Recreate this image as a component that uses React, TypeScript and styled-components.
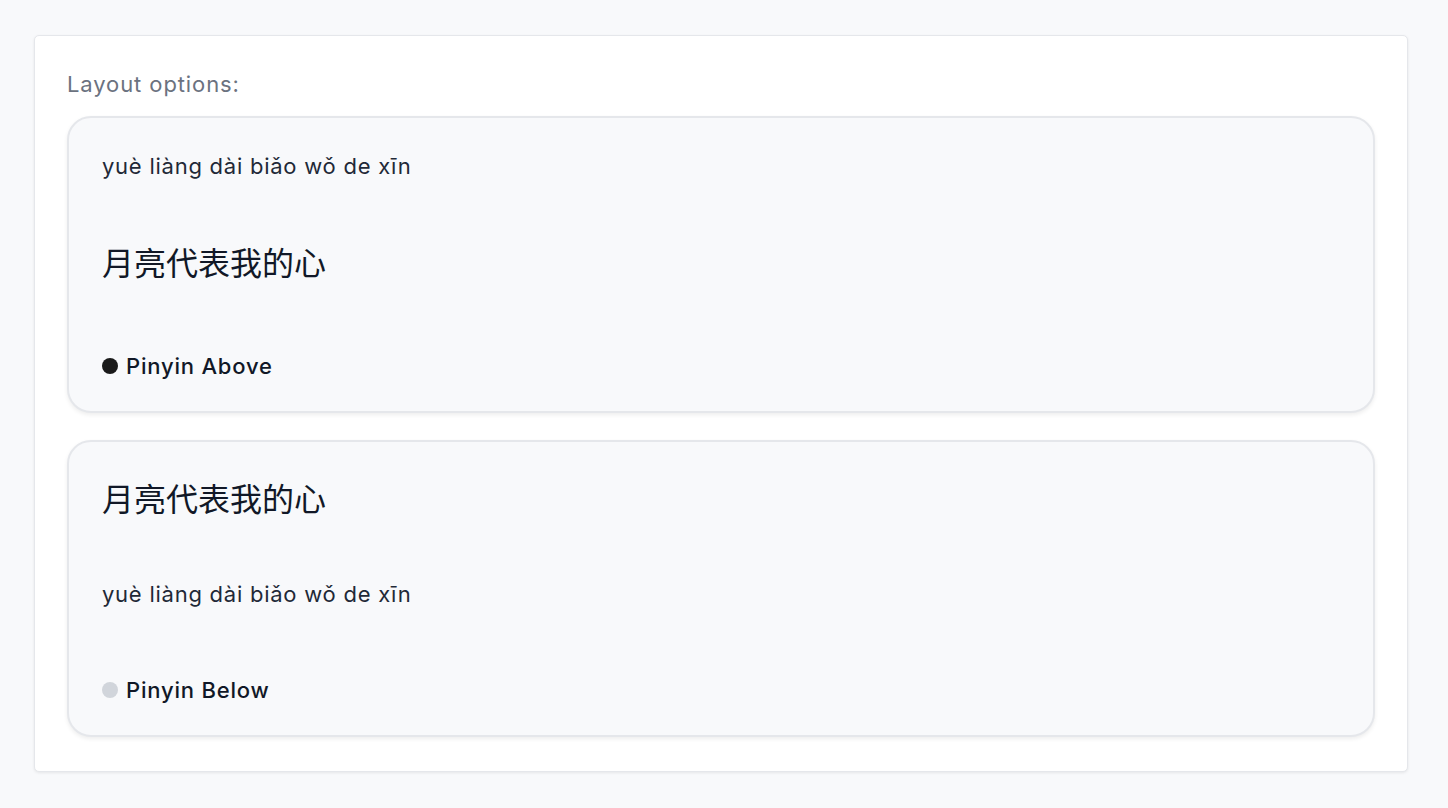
import { FC } from 'react';
import styled, { createGlobalStyle } from 'styled-components';

const GlobalStyle = createGlobalStyle`
  html, body {
    margin: 0;
    padding: 0;
    background: #f8f9fb;
  }
  body {
    font-family: Inter, "Noto Sans", "Noto Sans CJK SC", sans-serif;
    color: #111827;
  }
`;

const Page = styled.div`
  padding: 35px 40px 35px 34px;
  min-height: 808px;
  box-sizing: border-box;
`;

const Panel = styled.section`
  background: #ffffff;
  border: 1px solid #e5e7eb;
  border-radius: 5px;
  box-shadow: 0 1px 3px rgba(0, 0, 0, 0.08);
  padding: 32px 32px 34px;
  display: flex;
  flex-direction: column;
`;

const PanelLabel = styled.div`
  font-size: 22px;
  line-height: 32px;
  letter-spacing: 0.9px;
  color: #6b7280;
  margin-bottom: 16px;
`;

const OptionList = styled.div`
  display: flex;
  flex-direction: column;
  gap: 27px;
`;

const OptionCard = styled.div`
  background: #f8f9fb;
  border: 2px solid #e5e7eb;
  border-radius: 24px;
  box-shadow: 0 2px 4px rgba(0, 0, 0, 0.07);
  padding: 32px 33px 31px;
  display: flex;
  flex-direction: column;
`;

const Stack = styled.div<{ $above: boolean }>`
  display: flex;
  flex-direction: column;
  gap: ${(p) => (p.$above ? '56px' : '58px')};
`;

const Pinyin = styled.div`
  font-size: 22px;
  line-height: 32px;
  letter-spacing: 0.75px;
  color: #1f2937;
`;

const Hanzi = styled.div`
  font-family: "Noto Sans CJK SC", sans-serif;
  font-size: 32px;
  line-height: 46px;
  color: #111827;
`;

const OptionLabel = styled.div<{ $above: boolean }>`
  margin-top: ${(p) => (p.$above ? '68px' : '66px')};
  display: flex;
  align-items: center;
  gap: 8px;
  font-size: 22px;
  line-height: 28px;
  font-weight: 500;
  letter-spacing: 0.8px;
  color: #111827;
`;

const Dot = styled.span<{ $active: boolean }>`
  width: 16px;
  height: 16px;
  border-radius: 50%;
  background: ${(p) => (p.$active ? '#1a1a1a' : '#d1d5db')};
  flex-shrink: 0;
`;

const PINYIN = 'yuè liàng dài biǎo wǒ de xīn';
const HANZI = '月亮代表我的心';

type Option = { label: string; above: boolean; active: boolean };

const options: Option[] = [
  { label: 'Pinyin Above', above: true, active: true },
  { label: 'Pinyin Below', above: false, active: false },
];

const LayoutOption: FC<{ option: Option }> = ({ option }) => (
  <OptionCard>
    <Stack $above={option.above}>
      {option.above ? (
        <>
          <Pinyin>{PINYIN}</Pinyin>
          <Hanzi>{HANZI}</Hanzi>
        </>
      ) : (
        <>
          <Hanzi>{HANZI}</Hanzi>
          <Pinyin>{PINYIN}</Pinyin>
        </>
      )}
    </Stack>
    <OptionLabel $above={option.above}>
      <Dot $active={option.active} />
      {option.label}
    </OptionLabel>
  </OptionCard>
);

export default function App() {
  return (
    <>
      <GlobalStyle />
      <Page>
        <Panel>
          <PanelLabel>Layout options:</PanelLabel>
          <OptionList>
            {options.map((o) => (
              <LayoutOption key={o.label} option={o} />
            ))}
          </OptionList>
        </Panel>
      </Page>
    </>
  );
}
